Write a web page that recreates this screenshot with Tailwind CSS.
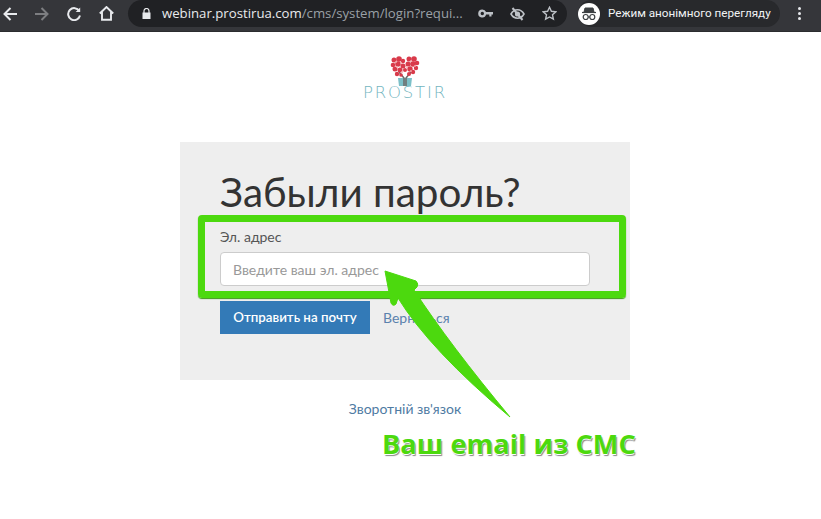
<!DOCTYPE html>
<html lang="en">
<head>
  <meta charset="UTF-8" />
  <meta name="viewport" content="width=device-width, initial-scale=1" />
  <title>Забыли пароль?</title>
  <script src="https://cdn.jsdelivr.net/npm/@tailwindcss/browser@4"></script>
</head>
<body class="relative h-[519px] w-[821px] overflow-hidden bg-white font-['Lato','Open_Sans',sans-serif]">
  <!-- browser toolbar -->
  <header class="flex h-[32px] items-start bg-[#35363a] border-b border-[#2b2c2f]">
    <div class="flex h-[27px] w-[128px] items-center pl-[3px] gap-[18px] text-[#e8eaed]">
      <svg class="w-[14px] h-[14px]" viewBox="0 0 14 14" fill="none" stroke="currentColor" stroke-width="2"><path d="M14 7H1.500M7.500 1L1.500 7l6 6"/></svg>
      <svg class="w-[14px] h-[14px] text-[#7d7e81]" viewBox="0 0 14 14" fill="none" stroke="currentColor" stroke-width="2"><path d="M0 7h12.500M6.500 1l6 6-6 6"/></svg>
      <svg class="w-[14px] h-[14px]" viewBox="0 0 14 14" fill="none" stroke="currentColor" stroke-width="2"><path d="M12.300 4A6 6 0 1 0 13 8.500"/><path d="M13.200 0.500v4.500H8.700z" fill="currentColor" stroke="none"/></svg>
      <svg class="w-[15px] h-[15px]" viewBox="0 0 15 15" fill="none" stroke="currentColor" stroke-width="1.900"><path d="M0.800 7.500L7.500 1l6.700 6.500M3 6v7.800h9V6"/></svg>
    </div>
    <div class="flex h-[27px] w-[439px] items-center rounded-full bg-[#202124] pl-[14px]">
      <svg class="w-[9px] h-[11px] mr-[11px] text-[#e8eaed]" viewBox="0 0 9 11" fill="currentColor"><path d="M0.500 4.500h8V11h-8z"/><path d="M2 5V3a2.500 2.500 0 0 1 5 0v2" fill="none" stroke="currentColor" stroke-width="1.200"/></svg>
      <span class="w-[310px] whitespace-nowrap font-['Open_Sans'] text-[13.200px] text-[#9aa0a6]"><span class="text-[#e8eaed]">webinar.prostirua.com</span>/cms/system/login?requi...</span>
      <svg class="w-[15px] h-[9px] ml-[6px] text-[#bdc1c6]" viewBox="0 0 15 9" fill="currentColor"><path fill-rule="evenodd" d="M4.300 0.500a4 4 0 0 1 3.800 2.600H15v2.400h-1.500v2h-2.200v-2H8.100A4 4 0 1 1 4.300 0.500zm0 2.300a1.700 1.700 0 1 0 0 3.400 1.700 1.700 0 0 0 0-3.400z"/></svg>
      <svg class="w-[15px] h-[14px] ml-[17px] text-[#bdc1c6]" viewBox="0 0 15 14" fill="none" stroke="currentColor" stroke-width="1.600"><path d="M1 7c1.600-2.800 3.800-4.200 6.500-4.200S12.400 4.200 14 7c-1.600 2.800-3.800 4.200-6.500 4.200S2.600 9.800 1 7z"/><circle cx="7.500" cy="7" r="1.800" fill="currentColor"/><path d="M2.500 1l10 12" stroke-width="2"/></svg>
      <svg class="w-[15px] h-[15px] ml-[17px] text-[#bdc1c6]" viewBox="0 0 15 15" fill="none" stroke="currentColor" stroke-width="1.400"><path d="M7.500 1.300l1.900 4 4.400 0.500-3.300 3 0.900 4.400-3.900-2.200-3.900 2.200 0.900-4.400-3.300-3 4.400-0.500z"/></svg>
    </div>
    <div class="ml-[11px] flex h-[27px] w-[202px] items-center rounded-full bg-[#28292c]">
      <span class="flex h-[22px] w-[22px] items-center justify-center rounded-full bg-white">
        <svg class="w-[16px] h-[14px]" viewBox="0 0 16 14" fill="none" stroke="#3c4043"><path d="M4 1h8l1 4H3z" fill="#3c4043"/><path d="M1 5.500h14" stroke-width="1.200"/><circle cx="4.700" cy="10" r="2.500" stroke-width="1.200"/><circle cx="11.300" cy="10" r="2.500" stroke-width="1.200"/><path d="M7 10h2" stroke-width="1"/></svg>
      </span>
      <span class="ml-[8px] whitespace-nowrap font-['Roboto'] text-[11.700px] text-[#f1f3f4]">Режим анонімного перегляду</span>
    </div>
    <div class="ml-[18px] flex h-[27px] flex-col items-center justify-center gap-[2px]">
      <span class="h-[3px] w-[3px] rounded-full bg-[#e8eaed]"></span>
      <span class="h-[3px] w-[3px] rounded-full bg-[#e8eaed]"></span>
      <span class="h-[3px] w-[3px] rounded-full bg-[#e8eaed]"></span>
    </div>
  </header>

  <main class="flex w-[810px] flex-col items-center">
    <!-- logo -->
    <div class="mt-[24px] flex h-[86px] w-[84px] flex-col items-center">
      <svg class="h-[30px] w-[30px] blur-[0.5px]" viewBox="0 0 30 30">
        <path d="M8 22h14l-1 8H9z" fill="#7cc0c8"/>
        <path d="M14 30v-8l-5-6M16 30v-8l5-6" stroke="#6d6a68" stroke-width="1.500" fill="none"/>
        <g fill="#d93a4a">
          <circle cx="4" cy="4" r="2.500"/><circle cx="9" cy="3" r="2.800"/><circle cx="13" cy="5" r="2.200"/>
          <circle cx="19" cy="3" r="2.500"/><circle cx="24" cy="3" r="2.800"/><circle cx="27" cy="7" r="2.300"/>
          <circle cx="3" cy="9" r="2.300"/><circle cx="8" cy="8" r="2.800"/><circle cx="13" cy="10" r="2.500"/>
          <circle cx="18" cy="8" r="2.500"/><circle cx="23" cy="8" r="2.800"/><circle cx="26" cy="12" r="2.200"/>
          <circle cx="5" cy="13" r="2.500"/><circle cx="10" cy="14" r="2.500"/><circle cx="15" cy="14" r="2"/>
          <circle cx="20" cy="13" r="2.700"/><circle cx="23" cy="16" r="2.200"/><circle cx="7" cy="18" r="2.200"/>
          <circle cx="11" cy="19" r="1.800"/><circle cx="19" cy="18" r="2"/>
        </g>
        <g fill="#f4a9ae">
          <circle cx="6" cy="6" r="0.900"/><circle cx="11" cy="7" r="0.900"/><circle cx="21" cy="5" r="0.900"/><circle cx="25" cy="10" r="0.900"/>
          <circle cx="7" cy="11" r="0.900"/><circle cx="17" cy="11" r="0.900"/><circle cx="12" cy="16" r="0.900"/><circle cx="21" cy="15" r="0.900"/>
        </g>
      </svg>
      <span class="whitespace-nowrap font-['DejaVu_Sans'] text-[16.500px] leading-[13px] tracking-[1.800px] font-extralight text-[#73b5c0]">PROSTIR</span>
    </div>

    <!-- form panel -->
    <section class="h-[238px] w-[450px] bg-[#eeeeee] px-[40px] pt-[25px]">
      <h1 class="text-[40.400px] leading-[50px] text-[#333333]">Забыли пароль?</h1>
      <label class="mt-[11px] block text-[14px] leading-[18px] text-[#555555]">Эл. адрес</label>
      <input class="mt-[6px] block h-[34px] w-[370px] rounded-[4px] border border-[#cccccc] bg-white px-[12px] text-[14px] placeholder:text-[#999999]" placeholder="Введите ваш эл. адрес" />
      <div class="mt-[15px] flex h-[33px] items-center">
        <button class="h-[33px] w-[150px] bg-[#337ab7] text-[13.300px] font-semibold text-white">Отправить на почту</button>
        <a class="ml-[13px] text-[14px] text-[#5b82ad]">Вернуться</a>
      </div>
    </section>

    <a class="mt-[20px] text-[14px] leading-[18px] text-[#4f7ba3]">Зворотній зв'язок</a>
  </main>

  <!-- annotation drawn over the page -->
  <div class="absolute left-[198px] top-[215px] h-[83px] w-[428px] rounded-[4px] border-[7px] border-[#4cd90e] shadow-[0_1px_1px_#3c9a12]"></div>
  <svg class="absolute left-0 top-0" width="821" height="519" fill="none">
    <path d="M385 271L416 281Q419 284 417 287L414 290Q450 345 510 417Q430 350 398 298L396 304Q393 307 391 303Z" fill="#4cd90e" stroke="#4cd90e" stroke-linejoin="round"/>
  </svg>
  <div class="absolute left-[382px] top-[425px] whitespace-nowrap font-['Open_Sans'] text-[27.300px] leading-[38px] font-bold text-[#4cd90e] [text-shadow:0_1px_0_#fff,1px_2px_1px_#888]">Ваш email из СМС</div>
</body>
</html>
